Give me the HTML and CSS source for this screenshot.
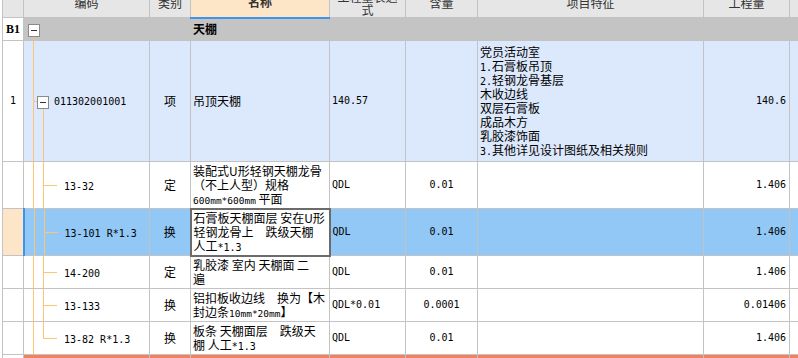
FILE: index.html
```html
<!DOCTYPE html>
<html lang="zh-CN">
<head>
  <meta charset="UTF-8">
  <title>分部分项</title>
  <link rel="stylesheet" href="styles.css">
</head>
<body>
  <div class="sheet">
    <table class="grid">
      <colgroup>
        <col class="c-no">
        <col class="c-code">
        <col class="c-type">
        <col class="c-name">
        <col class="c-expr">
        <col class="c-qty">
        <col class="c-feat">
        <col class="c-amount">
        <col class="c-rest">
      </colgroup>
      <thead>
        <tr class="head">
          <th></th>
          <th>编码</th>
          <th>类别</th>
          <th class="head-name">名称</th>
          <th class="head-wrap">工程量表达<br>式</th>
          <th>含量</th>
          <th>项目特征</th>
          <th>工程量</th>
          <th></th>
        </tr>
      </thead>
      <tbody>
        <tr class="row-section">
          <td class="no no-bold">B1</td>
          <td class="code tree-root"><span class="fold"></span></td>
          <td></td>
          <td class="name-bold">天棚</td>
          <td></td><td></td><td></td><td></td><td></td>
        </tr>
        <tr class="row-item">
          <td class="no">1</td>
          <td class="code tree-item"><span class="fold"></span><span class="num item-code">011302001001</span></td>
          <td class="center">项</td>
          <td>吊顶天棚</td>
          <td class="num">140.57</td>
          <td></td>
          <td>党员活动室<br><span class="num">1.</span>石膏板吊顶<br><span class="num">2.</span>轻钢龙骨基层<br>木收边线<br>双层石膏板<br>成品木方<br>乳胶漆饰面<br><span class="num">3.</span>其他详见设计图纸及相关规则</td>
          <td class="num right">140.6</td>
          <td></td>
        </tr>
        <tr class="row-tall">
          <td class="no"></td>
          <td class="code tree-child"><span class="num">13-32</span></td>
          <td class="center">定</td>
          <td>装配式U形轻钢天棚龙骨<br>（不上人型）规格<br><span class="small">600mm*600mm</span> 平面</td>
          <td class="num">QDL</td>
          <td class="num center">0.01</td>
          <td></td>
          <td class="num right">1.406</td>
          <td></td>
        </tr>
        <tr class="row-tall row-selected">
          <td class="no no-selected"></td>
          <td class="code tree-child code-selected"><span class="num">13-101 R*1.3</span></td>
          <td class="center">换</td>
          <td class="editing">石膏板天棚面层 安在U形<br>轻钢龙骨上　跌级天棚<br>人工<span class="num">*1.3</span></td>
          <td class="num">QDL</td>
          <td class="num center">0.01</td>
          <td></td>
          <td class="num right">1.406</td>
          <td></td>
        </tr>
        <tr class="row-mid">
          <td class="no"></td>
          <td class="code tree-child"><span class="num">14-200</span></td>
          <td class="center">定</td>
          <td>乳胶漆 室内 天棚面 二<br>遍</td>
          <td class="num">QDL</td>
          <td class="num center">0.01</td>
          <td></td>
          <td class="num right">1.406</td>
          <td></td>
        </tr>
        <tr class="row-mid">
          <td class="no"></td>
          <td class="code tree-child"><span class="num">13-133</span></td>
          <td class="center">换</td>
          <td>铝扣板收边线　换为【木<br>封边条<span class="small">10mm*20mm</span>】</td>
          <td class="num">QDL*0.01</td>
          <td class="num center">0.0001</td>
          <td></td>
          <td class="num right">0.01406</td>
          <td></td>
        </tr>
        <tr class="row-mid">
          <td class="no"></td>
          <td class="code tree-last"><span class="num">13-82 R*1.3</span></td>
          <td class="center">换</td>
          <td>板条 天棚面层　跌级天<br>棚 人工<span class="num">*1.3</span></td>
          <td class="num">QDL</td>
          <td class="num center">0.01</td>
          <td></td>
          <td class="num right">1.406</td>
          <td></td>
        </tr>
        <tr class="row-next">
          <td class="no"></td>
          <td></td><td></td><td></td><td></td><td></td><td></td><td></td><td></td>
        </tr>
      </tbody>
    </table>
  </div>
</body>
</html>
```

FILE: styles.css
```css
:root {
  --grid-line: #c3c3c3;
  --head-bg: #e6e6e6;
  --section-bg: #c4c4c4;
  --item-bg: #dce9fc;
  --selected-bg: #92c8f5;
  --peach: #fde6c8;
  --tree-line: #ffc470;
  --accent: #3d93ee;
}

* {
  box-sizing: border-box;
  margin: 0;
  padding: 0;
}

body {
  font-family: "Noto Sans CJK SC", sans-serif;
  font-size: 12px;
  color: #000;
  background-color: #fff;
}

.sheet {
  width: 798px;
  height: 358px;
  overflow: hidden;
  padding-left: 2px;
}

.grid {
  border-collapse: collapse;
  table-layout: fixed;
  width: 827px;
  margin-top: -13px;
}

.c-no { width: 21px; }
.c-code { width: 126px; }
.c-type { width: 41px; }
.c-name { width: 139px; }
.c-expr { width: 76px; }
.c-qty { width: 72px; }
.c-feat { width: 226px; }
.c-amount { width: 86px; }
.c-rest { width: 40px; }

.grid th,
.grid td {
  border: 1px solid var(--grid-line);
  padding: 0 2px;
  line-height: 14px;
  vertical-align: middle;
  white-space: nowrap;
  overflow: hidden;
  text-align: left;
}

/* header */
.head th {
  height: 30px;
  background-color: var(--head-bg);
  color: #333;
  font-weight: normal;
  font-size: 12px;
  text-align: center;
}

.head .head-name {
  background-color: var(--peach);
  font-weight: bold;
  border-bottom: 2px solid var(--accent);
}

.head .head-wrap {
  line-height: 13px;
  padding-top: 1px;
}

/* rows */
.row-section td { height: 23px; background-color: var(--section-bg); }
.row-item td { height: 121px; background-color: var(--item-bg); }
.row-tall td { height: 47px; }
.row-mid td { height: 33px; }
.row-next td { height: 20px; background-color: #f2825e; }
.row-selected td { background-color: var(--selected-bg); }

.grid .no {
  background-color: #fff;
  text-align: center;
  font-family: "DejaVu Sans Mono", monospace;
  font-size: 10px;
  padding: 0;
}

.grid .no-bold {
  font-family: "Liberation Serif", serif;
  font-weight: bold;
  font-size: 12px;
}

.grid .no-selected {
  background-color: var(--peach);
}

.code-selected {
  border-left: 2px solid var(--accent) !important;
}

.name-bold {
  font-weight: bold;
}

.num {
  font-family: "DejaVu Sans Mono", "Noto Sans CJK SC", monospace;
  font-size: 10px;
}

span.num,
.small {
  line-height: 10px;
}

.small {
  font-family: "DejaVu Sans Mono", monospace;
  font-size: 9.5px;
}

.center { text-align: center !important; }
.right { text-align: right !important; }
.grid td.right { padding-right: 3px; }

.grid td.editing {
  background-color: #fff;
  border: 2px solid #6b6b6b;
}

/* tree column */
.grid td.code {
  padding-left: 40px;
  background-repeat: no-repeat;
}

.fold {
  display: inline-block;
  width: 12px;
  height: 13px;
  border: 1px solid #8a8a8a;
  background: #fff linear-gradient(#333, #333) center / 6px 1px no-repeat;
  vertical-align: middle;
}

.grid td.tree-root {
  padding-left: 4px;
  background-image: linear-gradient(var(--tree-line), var(--tree-line));
  background-position: 9px 100%;
  background-size: 1px 50%;
}

.grid td.tree-item {
  padding-left: 13px;
  background-image:
    linear-gradient(var(--tree-line), var(--tree-line)),
    linear-gradient(var(--tree-line), var(--tree-line)),
    linear-gradient(var(--tree-line), var(--tree-line));
  background-position: 9px 0, 9px 50%, 19px 100%;
  background-size: 1px 100%, 5px 1px, 1px 50%;
}

.item-code {
  margin-left: 5px;
  vertical-align: middle;
}

.grid td.tree-child {
  background-image:
    linear-gradient(var(--tree-line), var(--tree-line)),
    linear-gradient(var(--tree-line), var(--tree-line)),
    linear-gradient(var(--tree-line), var(--tree-line));
  background-position: 9px 0, 19px 0, 19px 50%;
  background-size: 1px 100%, 1px 100%, 14px 1px;
}

.grid td.tree-last {
  background-image:
    linear-gradient(var(--tree-line), var(--tree-line)),
    linear-gradient(var(--tree-line), var(--tree-line)),
    linear-gradient(var(--tree-line), var(--tree-line));
  background-position: 9px 0, 19px 0, 19px 50%;
  background-size: 1px 100%, 1px 50%, 14px 1px;
}
```
